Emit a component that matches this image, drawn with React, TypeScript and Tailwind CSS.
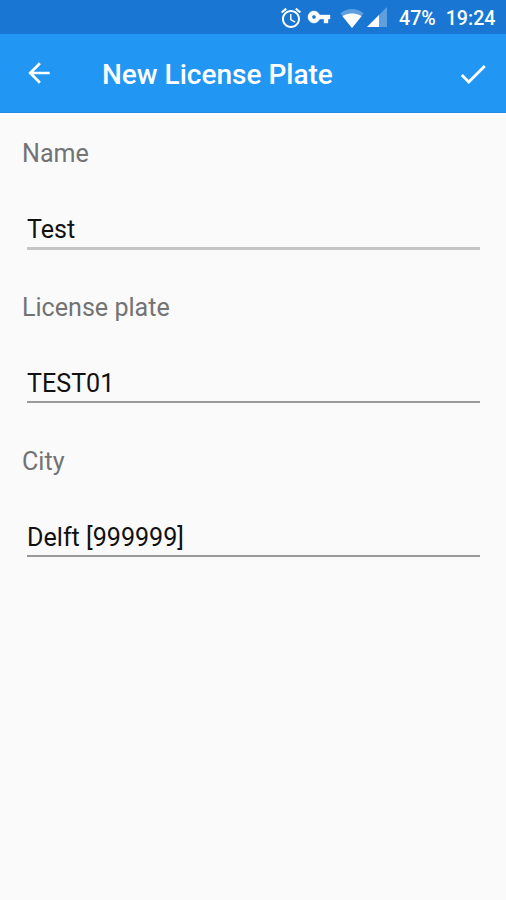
import { useState } from 'react';
import { clsx } from 'clsx';

function StatusBar() {
  return (
    <div className="flex h-[34px] shrink-0 items-center bg-[#1976d2] pl-[279px] text-white">
      <svg viewBox="0 0 24 24" className="mt-0.5 h-6 w-6" fill="currentColor">
        <path d="M22 5.72l-4.6-3.86-1.29 1.53 4.6 3.86L22 5.72zM7.88 3.39L6.6 1.86 2 5.71l1.29 1.53 4.59-3.85zM12.5 8H11v6l4.75 2.85.75-1.23-4-2.37V8zM12 4c-4.97 0-9 4.03-9 9s4.02 9 9 9c4.97 0 9-4.03 9-9s-4.03-9-9-9zm0 16c-3.87 0-7-3.13-7-7s3.13-7 7-7 7 3.13 7 7-3.13 7-7 7z" />
      </svg>
      <svg viewBox="0 0 24 24" className="ml-[4px] h-6 w-6" fill="currentColor" stroke="currentColor" strokeWidth=".4">
        <path d="M12.65 10C11.83 7.67 9.61 6 7 6c-3.31 0-6 2.69-6 6s2.69 6 6 6c2.61 0 4.83-1.67 5.65-4H17v4h4v-4h2v-4H12.65zM7 14c-1.1 0-2-.9-2-2s.9-2 2-2 2 .9 2 2-.9 2-2 2z" />
      </svg>
      <svg viewBox="0 0 24 19" className="ml-[9px] mt-0.5 h-[19px] w-6" fill="currentColor">
        <path fillOpacity=".3" d="M12 19L.4 4.5C1 4 5.200 0 12 0s11 4 11.600 4.500z" />
        <path d="M12 19L2.500 7.200C3.500 6.500 7 4.600 12 4.600s8.500 1.900 9.500 2.600z" />
      </svg>
      <svg viewBox="0 0 20 20" className="ml-[3px] h-5 w-5" fill="currentColor">
        <path fillOpacity=".3" d="M0 20h20V0z" />
        <path d="M0 20h12V8z" />
      </svg>
      <span className="ml-[12px] mt-[3px] text-[19.6px] font-medium leading-6">47%</span>
      <span className="ml-[10px] mt-[3px] text-[19.6px] font-medium leading-6">19:24</span>
    </div>
  );
}

function AppBar() {
  return (
    <header className="flex h-[79px] shrink-0 items-center border-b border-[#1f8ce8] bg-[#2196f3] pl-[22px] pr-[16px] text-white">
      <button aria-label="Back">
        <svg viewBox="0 0 24 24" className="h-[34px] w-[34px] p-px" fill="currentColor">
          <path d="M20 11H7.830l5.590-5.590L12 4l-8 8 8 8 1.410-1.410L7.830 13H20v-2z" />
        </svg>
      </button>
      <h1 className="ml-[46px] mt-[3px] flex-1 text-[28px] font-medium leading-8">New License Plate</h1>
      <button aria-label="Save">
        <svg viewBox="0 0 24 24" className="mt-px h-[34px] w-[34px]" fill="currentColor">
          <path d="M9 16.170L4.830 12l-1.420 1.410L9 19 21 7l-1.410-1.410z" />
        </svg>
      </button>
    </header>
  );
}

interface FieldProps {
  label: string;
  initial: string;
  light?: boolean;
}

function Field({ label, initial, light }: FieldProps) {
  const [value, setValue] = useState(initial);

  return (
    <label className="flex h-[154px] flex-col">
      <span className="text-[25.1px] leading-[30px] text-[#737373]">{label}</span>
      <input
        value={value}
        onChange={(e) => setValue(e.target.value)}
        className={clsx(
          'ml-[5px] mt-[45px] w-[453px] bg-transparent text-[25.1px] leading-[30px] text-[#111] outline-none',
          light ? 'h-[36px] border-b-[3px] border-[#c6c6c6] pb-[3px]' : 'h-[35px] border-b-2 border-[#999] pb-[3px]'
        )}
      />
    </label>
  );
}

export default function App() {
  return (
    <div className="flex h-screen flex-col bg-[#fafafa] font-[Roboto,sans-serif]">
      <StatusBar />
      <AppBar />
      <main className="flex flex-col pl-[22px] pt-[26px]">
        <Field label="Name" initial="Test" light />
        <Field label="License plate" initial="TEST01" />
        <Field label="City" initial="Delft [999999]" />
      </main>
    </div>
  );
}
